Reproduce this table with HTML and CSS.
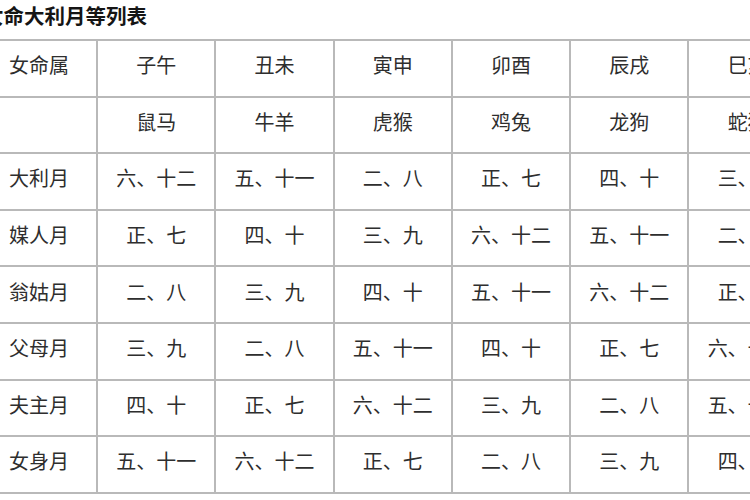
FILE: index.html
```html
<!DOCTYPE html>
<html lang="zh">
<head>
<meta charset="utf-8">
<link rel="stylesheet" href="styles.css">
</head>
<body>
<div class="page">
  <div class="title">女命大利月等列表</div>
  <div class="grid">
    <div class="c first">女命属</div><div class="c">子午</div><div class="c">丑未</div><div class="c">寅申</div><div class="c">卯酉</div><div class="c">辰戌</div><div class="c">巳亥</div>
    <div class="c first"></div><div class="c">鼠马</div><div class="c">牛羊</div><div class="c">虎猴</div><div class="c">鸡兔</div><div class="c">龙狗</div><div class="c">蛇猪</div>
    <div class="c first">大利月</div><div class="c">六、十二</div><div class="c">五、十一</div><div class="c">二、八</div><div class="c">正、七</div><div class="c">四、十</div><div class="c">三、九</div>
    <div class="c first">媒人月</div><div class="c">正、七</div><div class="c">四、十</div><div class="c">三、九</div><div class="c">六、十二</div><div class="c">五、十一</div><div class="c">二、八</div>
    <div class="c first">翁姑月</div><div class="c">二、八</div><div class="c">三、九</div><div class="c">四、十</div><div class="c">五、十一</div><div class="c">六、十二</div><div class="c">正、七</div>
    <div class="c first">父母月</div><div class="c">三、九</div><div class="c">二、八</div><div class="c">五、十一</div><div class="c">四、十</div><div class="c">正、七</div><div class="c">六、十二</div>
    <div class="c first">夫主月</div><div class="c">四、十</div><div class="c">正、七</div><div class="c">六、十二</div><div class="c">三、九</div><div class="c">二、八</div><div class="c">五、十一</div>
    <div class="c first">女身月</div><div class="c">五、十一</div><div class="c">六、十二</div><div class="c">正、七</div><div class="c">二、八</div><div class="c">三、九</div><div class="c">四、十</div>
  </div>
</div>
</body>
</html>
```
FILE: styles.css
```css
html, body {
  margin: 0;
  padding: 0;
  background: #ffffff;
  overflow: hidden;
}
.page {
  width: 750px;
  height: 500px;
  overflow: hidden;
  font-family: "Noto Sans CJK SC", "Noto Sans", sans-serif;
}
.title {
  height: 39px;
  line-height: 30px;
  margin-left: -17px;
  font-size: 20.5px;
  font-weight: 700;
  color: #151515;
  white-space: nowrap;
}
.grid {
  display: grid;
  grid-template-columns: 104px repeat(6, 116.3px);
  grid-auto-rows: 54.6px;
  gap: 2px;
  padding: 2px;
  margin-left: -10px;
  width: max-content;
  background: #b9b9b9;
}
.c {
  background: #ffffff;
  display: flex;
  align-items: center;
  justify-content: center;
  padding-bottom: 7px;
  box-sizing: border-box;
  font-size: 20px;
  color: #2e2e2e;
  white-space: nowrap;
}
.c.first {
  justify-content: flex-start;
  padding-left: 17px;
}
```
